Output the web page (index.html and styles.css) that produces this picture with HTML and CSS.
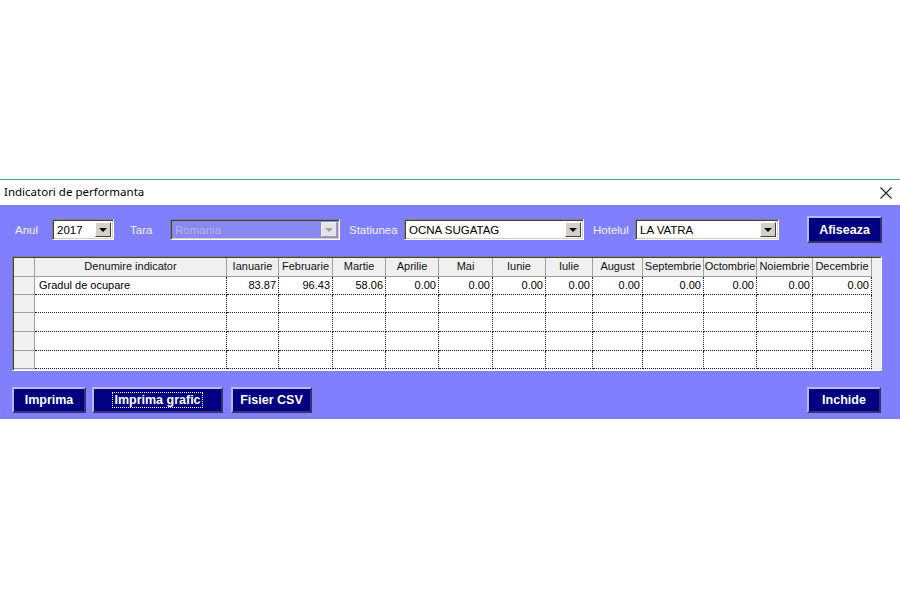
FILE: index.html
```html
<!DOCTYPE html>
<html lang="ro">
<head>
    <meta charset="UTF-8">
    <title>Indicatori de performanta</title>
    <link rel="stylesheet" href="styles.css">
</head>
<body>
    <div class="window">
        <div class="titlebar">
            <span class="title">Indicatori de performanta</span>
            <svg class="close" width="12" height="12" viewBox="0 0 12 12">
                <path d="M0.5 0.5 L11.5 11.5 M11.5 0.5 L0.5 11.5" stroke="#222" stroke-width="1.1" fill="none"/>
            </svg>
        </div>

        <div class="panel">
            <div class="filters">
                <label class="lbl lbl-anul">Anul</label>
                <div class="combo combo-an">
                    <span class="combo-text">2017</span>
                    <span class="combo-btn"><i class="arrow"></i></span>
                </div>

                <label class="lbl lbl-tara">Tara</label>
                <div class="combo combo-tara disabled">
                    <span class="combo-text">Romania</span>
                    <span class="combo-btn"><i class="arrow"></i></span>
                </div>

                <label class="lbl lbl-statiune">Statiunea</label>
                <div class="combo combo-statiune">
                    <span class="combo-text">OCNA SUGATAG</span>
                    <span class="combo-btn"><i class="arrow"></i></span>
                </div>

                <label class="lbl lbl-hotel">Hotelul</label>
                <div class="combo combo-hotel">
                    <span class="combo-text">LA VATRA</span>
                    <span class="combo-btn"><i class="arrow"></i></span>
                </div>

                <button class="btn btn-afiseaza">Afiseaza</button>
            </div>

            <div class="grid-box">
                <div class="grid" id="grid">
                    <!-- randurile sunt generate din script -->
                </div>
            </div>

            <div class="actions">
                <button class="btn btn-imprima">Imprima</button>
                <button class="btn btn-grafic"><span class="focus">Imprima grafic</span></button>
                <button class="btn btn-csv">Fisier CSV</button>
                <button class="btn btn-inchide">Inchide</button>
            </div>
        </div>
    </div>

    <script>
    const luni = ["Ianuarie", "Februarie", "Martie", "Aprilie", "Mai", "Iunie", "Iulie",
                  "August", "Septembrie", "Octombrie", "Noiembrie", "Decembrie"];

    const indicatori = [
        { nume: "Gradul de ocupare", valori: [83.87, 96.43, 58.06, 0, 0, 0, 0, 0, 0, 0, 0, 0] }
    ];

    const RANDURI = 5;

    function celula(clasa, text) {
        const div = document.createElement('div');
        div.className = 'cell ' + clasa;
        div.textContent = text;
        return div;
    }

    function deseneazaGrid() {
        const grid = document.getElementById('grid');
        grid.innerHTML = '';

        // capul de tabel
        grid.appendChild(celula('sel head', ''));
        grid.appendChild(celula('head', 'Denumire indicator'));
        luni.forEach(luna => grid.appendChild(celula('head', luna)));

        for (let i = 0; i < RANDURI; i++) {
            const item = indicatori[i];
            grid.appendChild(celula('sel', ''));
            grid.appendChild(celula('data name', item ? item.nume : ''));
            for (let j = 0; j < 12; j++) {
                grid.appendChild(celula('data num', item ? item.valori[j].toFixed(2) : ''));
            }
        }
    }

    deseneazaGrid();
    </script>
</body>
</html>
```

FILE: styles.css
```css
body {
    margin: 0;
    padding: 0;
    background: #fff;
    font-family: "Liberation Sans", Arial, sans-serif;
}

.window {
    margin-top: 179px;
    border-top: 1px solid #4fa67c;
}

.titlebar {
    height: 25px;
    display: flex;
    align-items: center;
    justify-content: space-between;
    padding: 0 8px 0 4px;
    background: #fff;
}

.title {
    font-family: "Noto Sans", "Open Sans", sans-serif;
    font-size: 11.5px;
    color: #000;
    margin-top: -3px;
}

.close {
    margin-top: 1px;
}

.panel {
    background: #8080ff;
    padding: 11px 18px 6px 12px;
}

/* rand de filtre */
.filters {
    display: flex;
    align-items: center;
    height: 27px;
}

.lbl {
    font-size: 11.5px;
    color: #f2f2ff;
}

.lbl-anul {
    margin-left: 3px;
    width: 37px;
}

.lbl-tara {
    margin-left: 16px;
    width: 40px;
}

.lbl-statiune {
    margin-left: 9px;
    width: 55px;
}

.lbl-hotel {
    margin-left: 9px;
    width: 42px;
}

.combo {
    box-sizing: border-box;
    height: 21px;
    display: flex;
    align-items: center;
    background: #fff;
    border-top: 1px solid #808080;
    border-left: 1px solid #808080;
    border-right: 1px solid #fff;
    border-bottom: 1px solid #fff;
    box-shadow: inset 1px 1px 0 #404040, inset -1px -1px 0 #d4d0c8;
    padding: 2px;
}

.combo-an { width: 62px; }
.combo-tara { width: 170px; }
.combo-statiune { width: 180px; }
.combo-hotel { width: 144px; }

.combo-text {
    flex: 1;
    font-size: 11.5px;
    color: #000;
    padding-left: 2px;
    white-space: nowrap;
    overflow: hidden;
}

.combo-btn {
    box-sizing: border-box;
    width: 16px;
    height: 15px;
    background: #d4d0c8;
    border-top: 1px solid #fff;
    border-left: 1px solid #fff;
    border-right: 1px solid #404040;
    border-bottom: 1px solid #404040;
    display: flex;
    align-items: center;
    justify-content: center;
}

.arrow {
    width: 0;
    height: 0;
    border-left: 4px solid transparent;
    border-right: 4px solid transparent;
    border-top: 4px solid #000;
    margin-top: 1px;
}

.combo.disabled {
    background: #8888f0;
}

.combo.disabled .combo-text {
    color: #b4b4ec;
}

.combo.disabled .combo-btn {
    background: #e4e4e4;
    border-color: #f4f4f4 #a0a0a0 #a0a0a0 #f4f4f4;
}

.combo.disabled .arrow {
    border-top-color: #a0a0a0;
}

/* butoane */
.btn {
    box-sizing: border-box;
    height: 26px;
    background: #000080;
    color: #fff;
    font-family: "Liberation Sans", Arial, sans-serif;
    font-weight: bold;
    font-size: 12.5px;
    border-top: 2px solid #b8b8e8;
    border-left: 2px solid #b8b8e8;
    border-right: 2px solid #34346a;
    border-bottom: 2px solid #34346a;
    padding: 0;
    cursor: pointer;
}

.btn-afiseaza {
    margin-left: auto;
    width: 75px;
    height: 27px;
}

.btn-imprima { width: 74px; }
.btn-grafic { width: 131px; margin-left: 6px; }
.btn-csv { width: 81px; margin-left: 8px; }
.btn-inchide { width: 74px; margin-left: auto; margin-right: 1px; }

.focus {
    outline: 1px dotted #fff;
    padding: 0 1px;
}

/* grila cu indicatori */
.grid-box {
    margin-top: 13px;
    height: 115px;
    box-sizing: border-box;
    background: #f0f0f0;
    border-top: 1px solid #808080;
    border-left: 1px solid #808080;
    border-right: 1px solid #fff;
    border-bottom: 1px solid #fff;
    box-shadow: inset 1px 1px 0 #404040;
    padding: 1px 0 0 1px;
}

.grid {
    display: grid;
    grid-template-columns: 21px 192px 52px 54px 53px 53px 54px 53px 47px 50px 61px 53px 56px 59px;
    grid-template-rows: 19px 18px 18px 19px 19px 18px;
}

.cell {
    box-sizing: border-box;
    font-size: 11px;
    color: #000;
    white-space: nowrap;
    overflow: hidden;
    line-height: 17px;
}

.head {
    background: #f0f0f0;
    text-align: center;
    border-right: 1px solid #a0a0a0;
    border-bottom: 1px solid #a0a0a0;
    color: #111;
}

.sel {
    background: #f0f0f0;
    border-right: 1px solid #a0a0a0;
    border-bottom: 1px solid #a0a0a0;
}

.data {
    background: #fff;
    border-right: 1px dotted #222;
    border-bottom: 1px dotted #222;
}

.name {
    padding-left: 4px;
}

.num {
    text-align: right;
    padding-right: 2px;
}

.actions {
    display: flex;
    align-items: center;
    margin-top: 16px;
    height: 26px;
}
```
